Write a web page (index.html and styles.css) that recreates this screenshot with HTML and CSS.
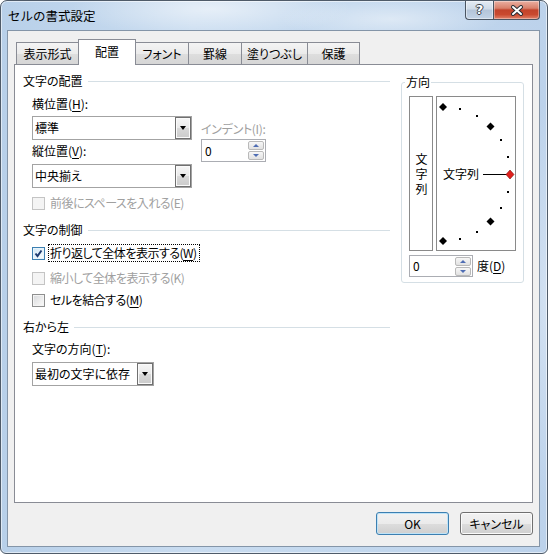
FILE: index.html
```html
<!DOCTYPE html>
<html lang="ja">
<head>
<meta charset="utf-8">
<title>セルの書式設定</title>
<link rel="stylesheet" href="styles.css">
</head>
<body>
<div class="window">
  <div class="titlebar">
    <div class="title">セルの書式設定</div>
    <div class="caption-btns">
      <div class="cap-btn help"><span>?</span></div>
      <div class="cap-btn close">
        <svg width="14" height="11" viewBox="0 0 14 11"><path d="M3 2 L11 9 M11 2 L3 9" stroke="#2b2f36" stroke-width="4" stroke-linecap="round"/><path d="M3 2 L11 9 M11 2 L3 9" stroke="#fff" stroke-width="2" stroke-linecap="round"/></svg>
      </div>
    </div>
  </div>
  <div class="client">
    <div class="tabs">
      <div class="tab t1">表示形式</div>
      <div class="tab t2 active">配置</div>
      <div class="tab t3">フォント</div>
      <div class="tab t4">罫線</div>
      <div class="tab t5">塗りつぶし</div>
      <div class="tab t6">保護</div>
    </div>
    <div class="panel">
      <div class="left">
        <div class="section-head"><span>文字の配置</span><i class="rule"></i></div>
        <div class="align-row">
          <div class="col-a">
            <div class="label">横位置(<u>H</u>):</div>
            <div class="combo c1"><span class="val">標準</span><span class="dd"></span></div>
            <div class="label l2">縦位置(<u>V</u>):</div>
            <div class="combo c2"><span class="val">中央揃え</span><span class="dd"></span></div>
          </div>
          <div class="col-b">
            <div class="label disabled indent-label">インデント(I):</div>
            <div class="spin indent-spin"><span class="num">0</span><span class="arrows"><i class="up"></i><i class="down"></i></span></div>
          </div>
        </div>
        <div class="check disabled ce"><span class="box"></span><span class="txt">前後にスペースを入れる(E)</span></div>

        <div class="section-head sh2"><span>文字の制御</span><i class="rule"></i></div>
        <div class="check checked cw"><span class="box"><svg width="11" height="11" viewBox="0 0 11 11"><path d="M2.5 5.5 L4.5 8 L8.5 2.5" fill="none" stroke="#1d3a70" stroke-width="2"/></svg></span><span class="txt focus">折り返して全体を表示する(<u>W</u>)</span></div>
        <div class="check disabled ck"><span class="box"></span><span class="txt">縮小して全体を表示する(K)</span></div>
        <div class="check cm"><span class="box"></span><span class="txt">セルを結合する(<u>M</u>)</span></div>

        <div class="section-head sh3"><span>右から左</span><i class="rule"></i></div>
        <div class="label l3">文字の方向(<u>T</u>):</div>
        <div class="combo c3"><span class="val">最初の文字に依存</span><span class="dd"></span></div>
      </div>

      <fieldset class="orient">
        <legend>方向</legend>
        <div class="orient-row">
          <div class="vbox"><span class="vtext">文字列</span></div>
          <div class="dial">
            <svg class="dial-svg" width="78" height="153" viewBox="0 0 78 153">
              <g fill="#000">
                <path d="M6 6 L10 10 L6 14 L2 10 Z"/>
                <rect x="22" y="11" width="2" height="2"/>
                <rect x="39" y="18" width="2" height="2"/>
                <path d="M53.5 25.5 L57.5 29.5 L53.5 33.5 L49.5 29.5 Z"/>
                <rect x="63" y="42" width="2" height="2"/>
                <rect x="70" y="59" width="2" height="2"/>
                <rect x="70" y="94" width="2" height="2"/>
                <rect x="63" y="110" width="2" height="2"/>
                <path d="M53.5 120.5 L57.5 124.5 L53.5 128.5 L49.5 124.5 Z"/>
                <rect x="39" y="134" width="2" height="2"/>
                <rect x="22" y="141" width="2" height="2"/>
                <path d="M6 140 L10 144 L6 148 L2 144 Z"/>
              </g>
              <rect x="46" y="77" width="24" height="1" fill="#000"/>
              <path d="M73 73 L77 77.5 L73 82 L69 77.5 Z" fill="#e0201c" stroke="#7a0b08" stroke-width="0.6"/>
            </svg>
            <span class="dial-text">文字列</span>
          </div>
        </div>
        <div class="deg-row">
          <div class="spin deg-spin"><span class="num">0</span><span class="arrows"><i class="up"></i><i class="down"></i></span></div>
          <span class="deg-label">度(<u>D</u>)</span>
        </div>
      </fieldset>
    </div>
    <div class="buttons">
      <button class="btn default">OK</button>
      <button class="btn">キャンセル</button>
    </div>
  </div>
</div>
</body>
</html>
```

FILE: styles.css
```css
* { box-sizing: border-box; }
html, body { margin: 0; padding: 0; }
body {
  width: 548px;
  height: 554px;
  overflow: hidden;
  background: #fff;
  font-family: "Noto Sans CJK JP", "Noto Sans", sans-serif;
  font-size: 12px;
  line-height: 16px;
  color: #000;
  font-feature-settings: "palt";
}
u { text-decoration: underline; text-underline-offset: 2px; text-decoration-thickness: 1px; }

.window {
  width: 548px;
  height: 554px;
  border: 1px solid #4f5b69;
  border-radius: 7px 7px 6px 6px;
  overflow: hidden;
  display: flex;
  flex-direction: column;
  box-shadow: inset 0 0 0 1px rgba(255,255,255,0.55);
  background:
    radial-gradient(ellipse 140px 28px at 210px 8px, rgba(255,255,255,0.55), rgba(255,255,255,0) 100%),
    radial-gradient(ellipse 110px 22px at 390px 18px, rgba(255,255,255,0.45), rgba(255,255,255,0) 100%),
    radial-gradient(ellipse 30px 200px at 546px 300px, rgba(255,255,255,0.35), rgba(255,255,255,0) 100%),
    linear-gradient(to right, #b8d0e9 0%, #c9dcf0 35%, #c3d8ee 65%, #bcd2eb 100%);
}

/* title bar */
.titlebar {
  height: 29px;
  display: flex;
  justify-content: space-between;
  align-items: flex-start;
  flex: none;
}
.title {
  padding-left: 7px;
  margin-top: 7px;
  font-size: 12.5px;
  line-height: 16px;
  font-feature-settings: normal;
  color: #000;
}
.caption-btns {
  display: flex;
  margin-right: 7px;
}
.cap-btn {
  height: 19px;
  border: 1px solid #4a5562;
  border-top: 0;
  display: flex;
  align-items: center;
  justify-content: center;
}
.cap-btn.help {
  width: 28px;
  border-right: 0;
  border-radius: 0 0 0 4px;
  background: linear-gradient(#e3ebf3 0%, #cfdbe8 45%, #b4c5d9 50%, #c2d3e6 100%);
  box-shadow: inset 0 0 0 1px rgba(255,255,255,0.45);
}
.cap-btn.help span {
  font-family: "DejaVu Sans", sans-serif;
  font-weight: bold;
  font-size: 13px;
  color: #fff;
  line-height: 14px;
  text-shadow: 1px 0 0 #39414c, -1px 0 0 #39414c, 0 1px 0 #39414c, 0 -1px 0 #39414c;
}
.cap-btn.close {
  width: 47px;
  border-radius: 0 0 4px 0;
  background: linear-gradient(#eab0a2 0%, #d8806b 40%, #c2432b 50%, #c9492f 75%, #e0826a 100%);
  box-shadow: inset 0 0 0 1px rgba(255,255,255,0.35);
}
.cap-btn.close svg { display: block; }

/* client area */
.client {
  margin: 0 7px 6px 6px;
  flex: 1;
  border: 1px solid #8495a8;
  background: #f0f0f0;
  display: flex;
  flex-direction: column;
}

.tabs {
  margin-top: 8px;
  height: 25px;
  padding-left: 8px;
  display: flex;
  align-items: flex-end;
  flex: none;
}
.tab {
  height: 22px;
  border: 1px solid #898c95;
  border-bottom: 0;
  margin-right: -1px;
  background: linear-gradient(#f4f4f4 0%, #ebebeb 50%, #dedede 51%, #d6d6d6 100%);
  display: flex;
  align-items: center;
  justify-content: center;
  line-height: 16px;
  padding-top: 1px;
}
.tab.active {
  height: 26px;
  margin-bottom: -1px;
  background: #fff;
  position: relative;
  z-index: 1;
  padding-top: 0;
  padding-bottom: 1px;
}
.t1 { width: 63px; }
.t2 { width: 58px; }
.t3 { width: 54px; }
.t4 { width: 54px; }
.t5 { width: 67px; }
.t6 { width: 53px; }

.panel {
  margin: 0 6px;
  height: 439px;
  flex: none;
  background: #fff;
  border: 1px solid #898c95;
  padding: 8px 8px 0 8px;
  display: flex;
  align-items: flex-start;
}

.left {
  width: 367px;
  flex: none;
  display: flex;
  flex-direction: column;
  align-items: flex-start;
}
.section-head {
  width: 100%;
  height: 16px;
  display: flex;
  align-items: center;
}
.section-head .rule {
  flex: 1;
  height: 1px;
  background: #d5dfe5;
  margin-left: 5px;
}
.sh2 { margin-top: 11px; }
.sh3 { margin-top: 11px; }

.label { height: 16px; white-space: nowrap; }
.disabled { color: #a0a0a0; }

.align-row {
  margin-top: 7px;
  margin-left: 9px;
  display: flex;
  align-items: flex-start;
}
.col-a { width: 160px; display: flex; flex-direction: column; }
.col-a .c1 { margin-top: 4px; }
.col-a .l2 { margin-top: 3px; }
.col-a .c2 { margin-top: 5px; }
.col-b { margin-left: 9px; display: flex; flex-direction: column; }
.indent-label { margin-top: 25px; letter-spacing: -0.3px; }
.indent-spin { margin-top: 2px; width: 65px; height: 23px; }

.combo {
  height: 24px;
  border: 1px solid #a3a3a3;
  background: #fff;
  display: flex;
  align-items: stretch;
}
.c1, .c2 { width: 160px; }
.c3 { width: 122px; margin-left: 9px; margin-top: 5px; }
.combo .val {
  flex: 1;
  padding-left: 2px;
  display: flex;
  align-items: center;
  white-space: nowrap;
}
.combo .dd {
  width: 16px;
  border: 1px solid #707070;
  background: linear-gradient(#f6f6f6 0%, #e9e9e9 50%, #d9d9d9 51%, #cbcbcb 100%);
  box-shadow: inset 0 0 0 1px #fafafa;
  display: flex;
  align-items: center;
  justify-content: center;
}
.combo .dd::after {
  content: "";
  width: 0;
  height: 0;
  border-left: 3.5px solid transparent;
  border-right: 3.5px solid transparent;
  border-top: 4px solid #000;
}

.l3 { margin-left: 9px; margin-top: 6px; }

/* spin boxes */
.spin {
  border: 1px solid #abadb3;
  background: #fff;
  display: flex;
  align-items: center;
}
.spin .num { flex: 1; padding-left: 3px; }
.spin .arrows {
  width: 16px;
  margin-right: 1px;
  display: flex;
  flex-direction: column;
  gap: 1px;
}
.spin .arrows i {
  height: 9px;
  border: 1px solid #b9b9b9;
  border-radius: 2px;
  background: linear-gradient(#f7f7f7, #e1e1e1);
  display: flex;
  align-items: center;
  justify-content: center;
}
.spin .arrows i::after {
  content: "";
  width: 0;
  height: 0;
  border-left: 3px solid transparent;
  border-right: 3px solid transparent;
}
.spin .arrows .up::after { border-bottom: 3px solid #4f6db3; }
.spin .arrows .down::after { border-top: 3px solid #4f6db3; }

/* checkboxes */
.check {
  margin-left: 9px;
  height: 16px;
  display: flex;
  align-items: center;
  white-space: nowrap;
}
.check .txt { letter-spacing: -0.5px; }
.check .box {
  width: 13px;
  height: 13px;
  border: 1px solid #8e8f8f;
  background: linear-gradient(135deg, #d6d8db 0%, #eeeeee 60%, #fbfbfb 100%);
  box-shadow: inset 0 0 0 1px #f4f4f4;
  margin-right: 5px;
  display: flex;
  align-items: center;
  justify-content: center;
  flex: none;
}
.check.disabled .box {
  border-color: #c4c4c4;
  background: #f4f4f4;
  box-shadow: none;
}
.check.checked .box {
  border-color: #3c7fb1;
  background: linear-gradient(135deg, #cfe6f5 0%, #eef7fc 70%, #fafdff 100%);
  box-shadow: inset 0 0 0 1px #e8f4fb;
}
.check.checked .box svg { display: block; }
.ce { margin-top: 7px; }
.cw { margin-top: 6px; height: 18px; }
.cw .box { margin-right: 3px; }
.txt.focus {
  border: 1px dotted #000;
  padding: 0 2px 0 1px;
  height: 18px;
  line-height: 16px;
}
.ck { margin-top: 8px; }
.cm { margin-top: 6px; }

/* orientation group */
.orient {
  margin: 1px 0 0 11px;
  width: 123px;
  min-inline-size: 0;
  border: 1px solid #d5dfe5;
  border-radius: 3px;
  padding: 6px 6px 5px 7px;
}
.orient legend {
  padding: 0 1px;
  margin-left: -4px;
  line-height: 16px;
}
.orient-row {
  display: flex;
  gap: 3px;
}
.vbox {
  width: 24px;
  height: 155px;
  border: 1px solid #8a8a8a;
  display: flex;
  align-items: center;
  justify-content: center;
}
.vtext {
  writing-mode: vertical-rl;
  text-orientation: upright;
  letter-spacing: 3px;
  line-height: 16px;
  font-feature-settings: normal;
  padding-top: 3px;
}
.dial {
  width: 80px;
  height: 155px;
  border: 1px solid #8a8a8a;
  position: relative;
}
.dial-svg { display: block; }
.dial-text {
  position: absolute;
  left: 6px;
  top: 69px;
  line-height: 16px;
  white-space: nowrap;
}
.deg-row {
  margin-top: 4px;
  display: flex;
  align-items: center;
}
.deg-spin { width: 64px; height: 22px; }
.deg-label { margin-left: 4px; }

/* bottom buttons */
.buttons {
  margin-top: 9px;
  padding-right: 6px;
  display: flex;
  justify-content: flex-end;
  gap: 11px;
}
.btn {
  width: 73px;
  height: 23px;
  padding: 0;
  border: 1px solid #707070;
  border-radius: 3px;
  background: linear-gradient(#f2f2f2 0%, #ebebeb 50%, #dddddd 51%, #cfcfcf 100%);
  box-shadow: inset 0 0 0 1px #fbfbfb;
  font-family: inherit;
  font-size: 12px;
  font-feature-settings: "palt";
  color: #000;
  line-height: 16px;
}
.btn.default {
  border-color: #3c7fb1;
  box-shadow: inset 0 0 0 1px #bfe3f7;
}
```
